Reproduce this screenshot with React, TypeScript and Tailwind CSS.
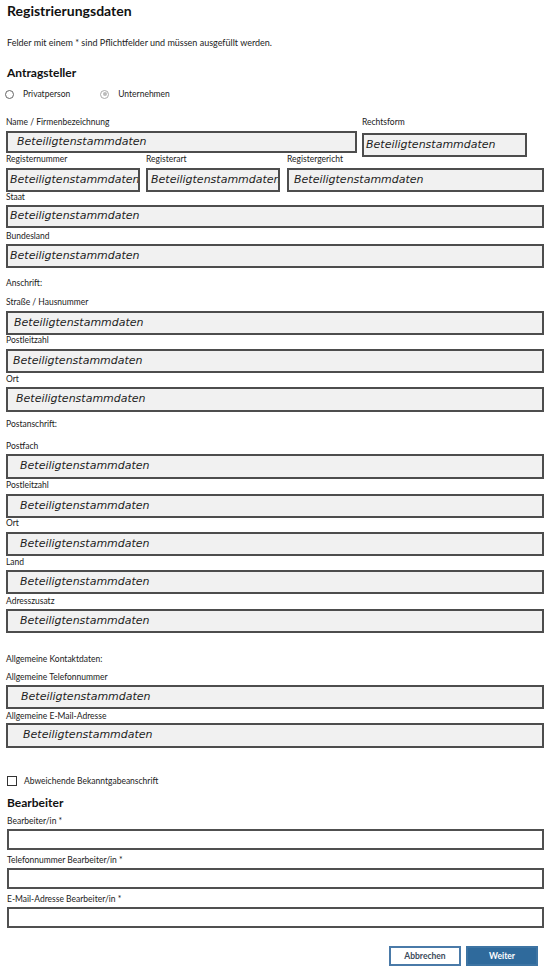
import React from 'react'

const PH = 'Beteiligtenstammdaten'

function Label({ children, className = '' }: { children: React.ReactNode; className?: string }) {
  return <div className={`h-[10px] text-[8.5px] leading-[10px] text-[#1a1a1a] ${className}`}>{children}</div>
}

function Filled({ className = '' }: { className?: string }) {
  return (
    <div
      className={`flex items-center border-2 border-[#4d4d4d] bg-[#f1f1f1] font-['DejaVu_Sans',sans-serif] text-[11px] italic text-[#1e1e1e] whitespace-nowrap overflow-hidden ${className}`}
    >
      {PH}
    </div>
  )
}

function Empty({ className = '' }: { className?: string }) {
  return <div className={`h-[21px] border-2 border-[#505050] bg-white ${className}`} />
}

export default function App() {
  return (
    <div className="w-[550px] min-h-[971px] bg-white px-[6px] font-['Lato',sans-serif] text-[#222]">
      <h1 className="mt-[1px] pl-[1px] text-[14px] font-bold leading-[20px] text-[#111]">Registrierungsdaten</h1>
      <p className="mt-[17px] pl-[1px] text-[9px] leading-[10px]">
        Felder mit einem * sind Pflichtfelder und müssen ausgefüllt werden.
      </p>

      <h2 className="mt-[17px] pl-[1px] text-[12px] font-bold leading-[16px] text-[#111]">Antragsteller</h2>
      <div className="mt-[7px] flex h-[12px] items-center text-[8.5px]">
        <span className="ml-[-1px] h-[9px] w-[9px] rounded-full border border-[#666] bg-white" />
        <span className="ml-[9px]">Privatperson</span>
        <span className="ml-[30px] flex h-[9px] w-[9px] items-center justify-center rounded-full border border-[#aaa] bg-white">
          <span className="h-[4px] w-[4px] rounded-full bg-[#bbb]" />
        </span>
        <span className="ml-[9px]">Unternehmen</span>
      </div>

      {/* Name / Rechtsform */}
      <div className="mt-[17px] flex items-start">
        <div className="w-[351px]">
          <Label>Name / Firmenbezeichnung</Label>
          <Filled className="mt-[4px] h-[22px] pl-[9px]" />
        </div>
        <div className="ml-[5px] w-[165px]">
          <Label>Rechtsform</Label>
          <Filled className="mt-[6px] mb-[-4px] h-[24px] pl-[2px]" />
        </div>
      </div>

      {/* Register */}
      <div className="mt-[1px] flex items-start">
        <div className="w-[134px]">
          <Label>Registernummer</Label>
          <Filled className="mt-[4px] h-[24px] pl-[2px]" />
        </div>
        <div className="ml-[6px] w-[134px]">
          <Label>Registerart</Label>
          <Filled className="mt-[4px] h-[24px] pl-[3px]" />
        </div>
        <div className="ml-[7px] flex-1">
          <Label>Registergericht</Label>
          <Filled className="mt-[4px] h-[24px] pl-[5px]" />
        </div>
      </div>

      <Label>Staat</Label>
      <Filled className="mt-[3px] h-[23px] pl-[2px]" />
      <Label className="mt-[3px]">Bundesland</Label>
      <Filled className="mt-[3px] h-[24px] pl-[2px]" />

      <Label className="mt-[10px]">Anschrift:</Label>
      <Label className="mt-[9px]">Straße / Hausnummer</Label>
      <Filled className="mt-[4px] h-[24px] pl-[6px]" />
      <Label>Postleitzahl</Label>
      <Filled className="mt-[4px] h-[24px] pl-[5px]" />
      <Label className="mt-[1px]">Ort</Label>
      <Filled className="mt-[3px] h-[25px] pl-[8px]" />

      <Label className="mt-[7px]">Postanschrift:</Label>
      <Label className="mt-[12px]">Postfach</Label>
      <Filled className="mt-[3px] h-[25px] pl-[12px]" />
      <Label className="mt-[1px]">Postleitzahl</Label>
      <Filled className="mt-[4px] h-[24px] pl-[12px]" />
      <Label>Ort</Label>
      <Filled className="mt-[4px] h-[24px] pl-[12px]" />
      <Label className="mt-[1px]">Land</Label>
      <Filled className="mt-[3px] h-[24px] pl-[12px]" />
      <Label className="mt-[2px]">Adresszusatz</Label>
      <Filled className="mt-[3px] h-[24px] pl-[12px]" />

      <Label className="mt-[21px]">Allgemeine Kontaktdaten:</Label>
      <Label className="mt-[8px]">Allgemeine Telefonnummer</Label>
      <Filled className="mt-[3px] h-[24px] pl-[13px]" />
      <Label className="mt-[2px]">Allgemeine E-Mail-Adresse</Label>
      <Filled className="mt-[2px] h-[25px] pl-[15px]" />

      <div className="mt-[28px] flex h-[10px] items-center text-[8.5px]">
        <span className="ml-[1px] h-[10px] w-[10px] border border-[#333] bg-white" />
        <span className="ml-[7px]">Abweichende Bekanntgabeanschrift</span>
      </div>

      <h2 className="mt-[9px] pl-[1px] text-[12px] font-bold leading-[16px] text-[#111]">Bearbeiter</h2>
      <Label className="mt-[5px] pl-[1px]">Bearbeiter/in *</Label>
      <Empty className="mt-[3px] ml-[1px]" />
      <Label className="mt-[5px] pl-[1px]">Telefonnummer Bearbeiter/in *</Label>
      <Empty className="mt-[3px] ml-[1px]" />
      <Label className="mt-[5px] pl-[1px]">E-Mail-Adresse Bearbeiter/in *</Label>
      <Empty className="mt-[3px] ml-[1px]" />

      <div className="mt-[18px] flex justify-end pr-[6px]">
        <button className="h-[20px] w-[72px] border-2 border-[#4a7aa8] bg-white text-[8.5px] font-bold text-[#3b4a5a]">
          Abbrechen
        </button>
        <button className="ml-[5px] h-[20px] w-[72px] border-2 border-[#3d74a3] bg-[#2f6a9c] text-[8.5px] font-bold text-white">
          Weiter
        </button>
      </div>
    </div>
  )
}
